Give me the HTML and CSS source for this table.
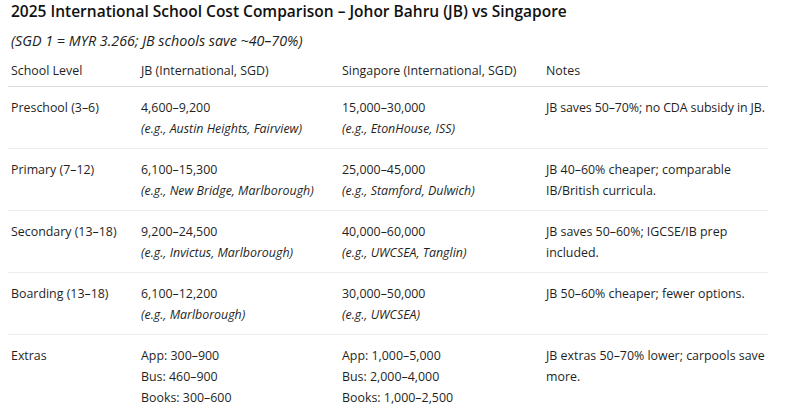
FILE: index.html
```html
<!DOCTYPE html>
<html lang="en">
<head>
<meta charset="utf-8">
<title>2025 International School Cost Comparison</title>
<link rel="stylesheet" href="styles.css">
</head>
<body>
<div class="page">
  <h1 class="title">2025 International School Cost Comparison – Johor Bahru (JB) vs Singapore</h1>
  <p class="subtitle">(SGD 1 = MYR 3.266; JB schools save ~40–70%)</p>
  <table class="cost">
    <colgroup>
      <col class="c1"><col class="c2"><col class="c3"><col class="c4">
    </colgroup>
    <thead>
      <tr>
        <th>School Level</th>
        <th>JB (International, SGD)</th>
        <th>Singapore (International, SGD)</th>
        <th>Notes</th>
      </tr>
    </thead>
    <tbody>
      <tr>
        <td>Preschool (3–6)</td>
        <td>4,600–9,200<br><em>(e.g., Austin Heights, Fairview)</em></td>
        <td>15,000–30,000<br><em>(e.g., EtonHouse, ISS)</em></td>
        <td class="single">JB saves 50–70%; no CDA subsidy in JB.</td>
      </tr>
      <tr>
        <td>Primary (7–12)</td>
        <td>6,100–15,300<br><em>(e.g., New Bridge, Marlborough)</em></td>
        <td>25,000–45,000<br><em>(e.g., Stamford, Dulwich)</em></td>
        <td>JB 40–60% cheaper; comparable IB/British curricula.</td>
      </tr>
      <tr>
        <td>Secondary (13–18)</td>
        <td>9,200–24,500<br><em>(e.g., Invictus, Marlborough)</em></td>
        <td>40,000–60,000<br><em>(e.g., UWCSEA, Tanglin)</em></td>
        <td>JB saves 50–60%; IGCSE/IB prep included.</td>
      </tr>
      <tr>
        <td>Boarding (13–18)</td>
        <td>6,100–12,200<br><em>(e.g., Marlborough)</em></td>
        <td>30,000–50,000<br><em>(e.g., UWCSEA)</em></td>
        <td>JB 50–60% cheaper; fewer options.</td>
      </tr>
      <tr>
        <td>Extras</td>
        <td>App: 300–900<br>Bus: 460–900<br>Books: 300–600</td>
        <td>App: 1,000–5,000<br>Bus: 2,000–4,000<br>Books: 1,000–2,500</td>
        <td>JB extras 50–70% lower; carpools save more.</td>
      </tr>
    </tbody>
  </table>
</div>
</body>
</html>
```
FILE: styles.css
```css
html, body {
  margin: 0;
  padding: 0;
  background: #ffffff;
}
body {
  font-family: "Open Sans", "Noto Sans", "DejaVu Sans", sans-serif;
  color: #1f1f1f;
  font-size: 12.4px;
}
.page {
  padding: 0 25px 0 8px;
}
.title {
  margin: 0;
  padding: 0 0 0 3px;
  font-size: 15.5px;
  font-weight: 600;
  line-height: 22px;
  color: #111111;
}
.subtitle {
  margin: 8px 0 0 0;
  padding-left: 3px;
  font-style: italic;
  line-height: 22px;
  font-size: 14.3px;
  color: #222222;
}
.cost {
  width: 760px;
  border-collapse: collapse;
  table-layout: fixed;
  margin-top: 8px;
}
.c1 { width: 130px; }
.c2 { width: 201px; }
.c3 { width: 204px; }
.c4 { width: 225px; }
.cost th {
  text-align: left;
  font-weight: 400;
  padding: 0 3px 5px 3px;
  line-height: 21px;
  border-bottom: 1px solid #d9d9d9;
  vertical-align: top;
}
.cost td {
  padding: 10px 1px 9px 3px;
  line-height: 21px;
  vertical-align: top;
  border-bottom: 1px solid #ececec;
}
.cost tbody tr:last-child td {
  border-bottom: none;
}
.cost td:last-child {
  padding-right: 0;
}
.cost td.single {
  white-space: nowrap;
  letter-spacing: -0.1px;
}
.cost em {
  font-style: italic;
}
```
